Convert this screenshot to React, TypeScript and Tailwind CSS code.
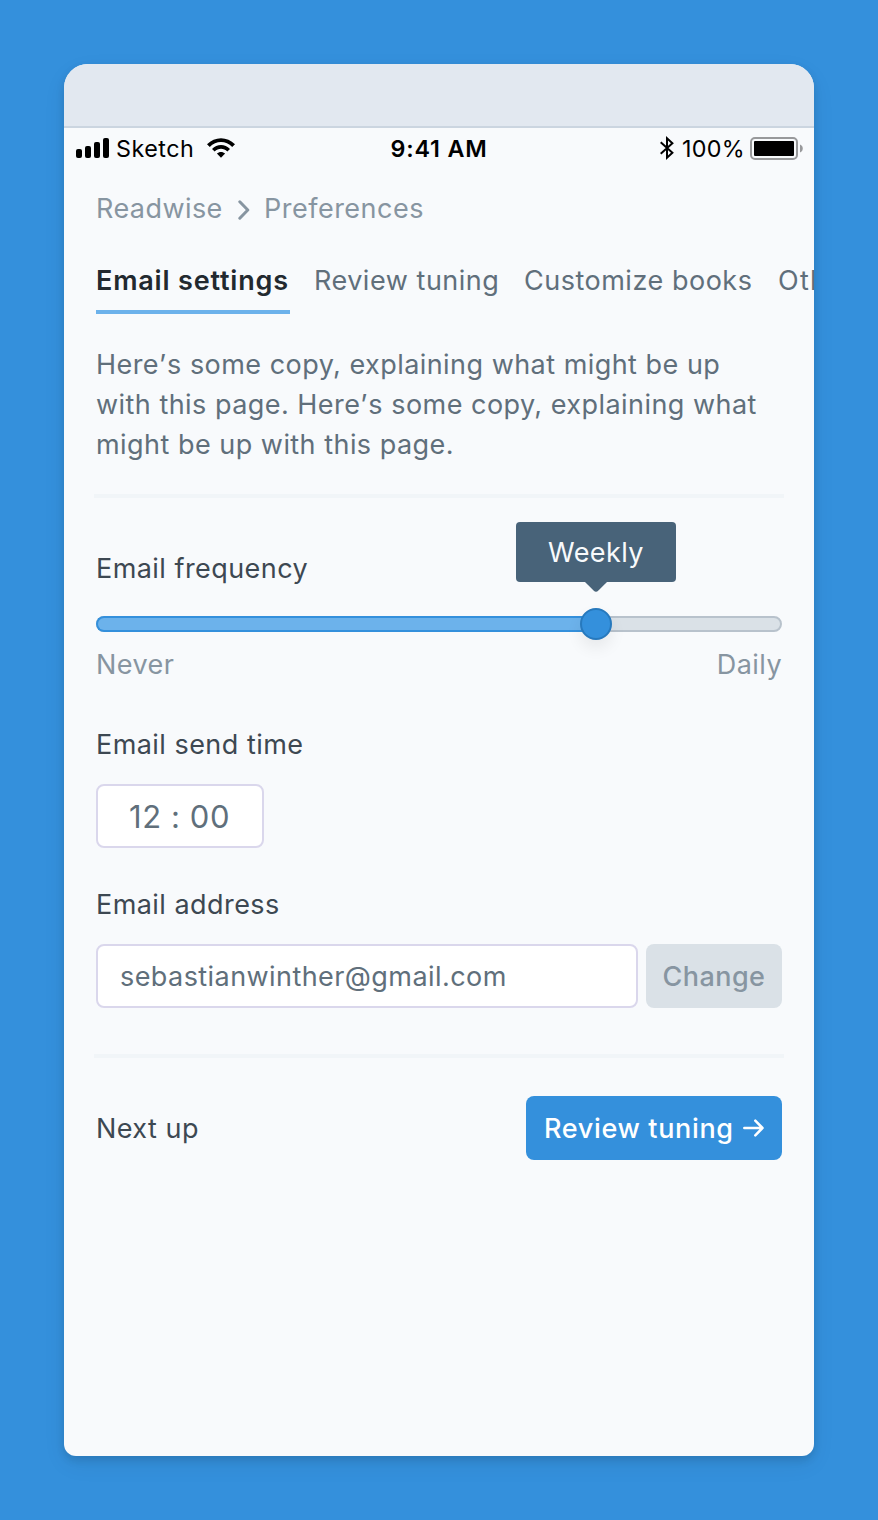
import React from "react";

function StatusBar() {
  return (
    <div className="relative flex h-10 items-center justify-between pr-[11px] pl-3 text-[23.3px] text-black">
      <div className="flex items-center">
        <svg width="33" height="20" viewBox="0 0 33 20" fill="currentColor">
          <rect x="0" y="11" width="6" height="9" rx="2" />
          <rect x="9" y="8" width="6" height="12" rx="2" />
          <rect x="18" y="4" width="6" height="16" rx="2" />
          <rect x="27" y="0" width="6" height="20" rx="2" />
        </svg>
        <span className="ml-[7px] w-[78px] pt-0.5 leading-10 tracking-[0.5px]">Sketch</span>
        <svg className="ml-[12px]" width="30" height="20" viewBox="0 0 30 20" fill="currentColor">
          <path d="M1 6.3C8.8 -1.9 21.2 -1.9 29 6.3L26.2 8.9C20 2.2 10 2.2 3.8 8.9Z" />
          <path d="M6 11C11 5.7 19 5.7 24 11L21.3 13.6C17.9 9.9 12.1 9.9 8.7 13.6Z" />
          <path d="M10.9 15.6C13.2 13.4 16.8 13.4 19.1 15.6L15 19.8Z" />
        </svg>
      </div>
      <div className="absolute inset-x-0 top-px text-center leading-10 font-semibold tracking-[0.8px]">9:41 AM</div>
      <div className="flex items-center">
        <svg width="14" height="24" viewBox="0 0 14 24" fill="none" stroke="currentColor" strokeWidth="2">
          <path d="M0.7 6.2L12.4 16.8L7 21.7V2.3L12.4 7.2L0.7 17.8" />
        </svg>
        <span className="ml-2 w-[62px] pt-0.5 leading-10 tracking-[0.3px]">100%</span>
        <svg className="ml-[6px]" width="53" height="24" viewBox="0 0 53 24">
          <rect x="1" y="2" width="46" height="21" rx="4" fill="none" stroke="#98999b" strokeWidth="2" />
          <rect x="4" y="5" width="40" height="15" rx="1" fill="#000" />
          <path d="M50 8.5C53.7 9.7 53.7 15.2 50 16.5Z" fill="#98999b" />
        </svg>
      </div>
    </div>
  );
}

function Divider({ className }: { className: string }) {
  return <div className={`-mx-0.5 h-1 bg-[#f1f5f8] ${className}`} />;
}

function Heres() {
  return (
    <>
      Here<span className="tracking-[1px]">’</span>s
    </>
  );
}

export default function App() {
  return (
    <div className="h-[1520px] w-[878px] bg-[#3490dc] p-16 font-['Inter',sans-serif]">
      <main className="h-[1392px] w-[750px] overflow-hidden rounded-t-3xl rounded-b-xl bg-[#f8fafc] text-[27px] leading-10 tracking-[0.43px] [word-spacing:0.2px] text-[#606f7b] shadow-[0_4px_8px_rgba(0,0,0,0.12),0_8px_24px_rgba(0,0,0,0.06)]">
        <div className="h-16 border-b-2 border-[#cbd5e0] bg-[#e2e8f0]" />
        <StatusBar />
        <div className="px-8">
          <nav className="mt-[21px] flex items-center text-[#8795a1]">
            <span className="w-[126px]">Readwise</span>
            <svg className="mt-0.5 ml-4" width="12" height="20" viewBox="0 0 12 20" fill="none" stroke="currentColor" strokeWidth="3" strokeLinecap="round" strokeLinejoin="round">
              <path d="M1.8 1.8L9.8 10L1.8 18.2" />
            </svg>
            <span className="ml-3.5 tracking-[0.5px]">Preferences</span>
          </nav>
          <div className="mt-8 flex whitespace-nowrap">
            <span className="w-[194px] shrink-0 border-b-4 border-[#6cb2eb] pb-[9px] font-semibold tracking-[0.8px] text-[#22292f]">Email settings</span>
            <span className="ml-6 w-[186px] shrink-0 tracking-[0.5px]">Review tuning</span>
            <span className="ml-6 w-[230px] shrink-0 tracking-[0.5px]">Customize books</span>
            <span className="ml-6 shrink-0 tracking-[1.3px]">Other</span>
          </div>
          <p className="mt-[31px] whitespace-nowrap">
            <Heres /> some copy, explaining what might be up
            <br />
            with this page. <Heres /> some copy, explaining what
            <br />
            might be up with this page.
          </p>
          <Divider className="mt-[29px]" />
          <div className="mt-[51px] text-[#3d4852]">Email frequency</div>
          <div className="relative mt-[27px] h-4 rounded-full border-2 border-[#b8c2cc] bg-[#dae1e7]">
            <div className="absolute -top-0.5 -left-0.5 h-4 w-[500px] rounded-l-full border-2 border-r-0 border-[#3490dc] bg-[#6cb2eb]" />
            <div className="absolute -top-2.5 left-[482px] size-8 rounded-full border-2 border-[#2779bd] bg-[#3490dc] shadow-[0_8px_16px_rgba(0,0,0,0.07)]" />
            <div className="absolute -top-24 left-[418px] h-[60px] w-40 rounded bg-[#486379] text-center leading-[62px] text-[#f8fafc]">
              Weekly
              <svg className="absolute top-[59px] left-[68px]" width="24" height="11" viewBox="0 0 24 11" fill="#486379">
                <path d="M0 0H24L14.4 9.6Q12 12 9.6 9.6Z" />
              </svg>
            </div>
          </div>
          <div className="mt-[13px] flex justify-between text-[#8795a1]">
            <span>Never</span>
            <span>Daily</span>
          </div>
          <div className="mt-10 text-[#3d4852]">Email send time</div>
          <div className="mt-[19px] flex h-16 w-42 items-center justify-center rounded-lg border-2 border-[#dad7ec] bg-white pt-px pr-px text-[31px] tracking-[0.5px]">12 : 00</div>
          <div className="mt-[37px] text-[#3d4852]">Email address</div>
          <div className="mt-[19px] flex gap-2">
            <div className="flex h-16 w-[542px] items-center rounded-lg border-2 border-[#dad7ec] bg-white pt-0.5 pl-[22px]">sebastianwinther@gmail.com</div>
            <button className="h-16 w-[136px] rounded-lg bg-[#dae1e7] pt-0.5 font-medium text-[#8795a1]">Change</button>
          </div>
          <Divider className="mt-[46px]" />
          <div className="mt-[38px] flex items-center justify-between">
            <span className="pt-0.5 text-[#3d4852]">Next up</span>
            <button className="flex h-16 w-64 items-center rounded-lg bg-[#3490dc] pl-[18px] font-medium tracking-[0.65px] whitespace-nowrap text-white">
              <span className="pt-0.5">Review tuning</span>
              <svg className="ml-auto mr-[18px]" width="21" height="18" viewBox="0 0 21 18" fill="none" stroke="currentColor" strokeWidth="2.5" strokeLinecap="round" strokeLinejoin="round">
                <path d="M1.3 9H19.5M12.3 1.7L19.5 9L12.3 16.3" />
              </svg>
            </button>
          </div>
        </div>
      </main>
    </div>
  );
}
